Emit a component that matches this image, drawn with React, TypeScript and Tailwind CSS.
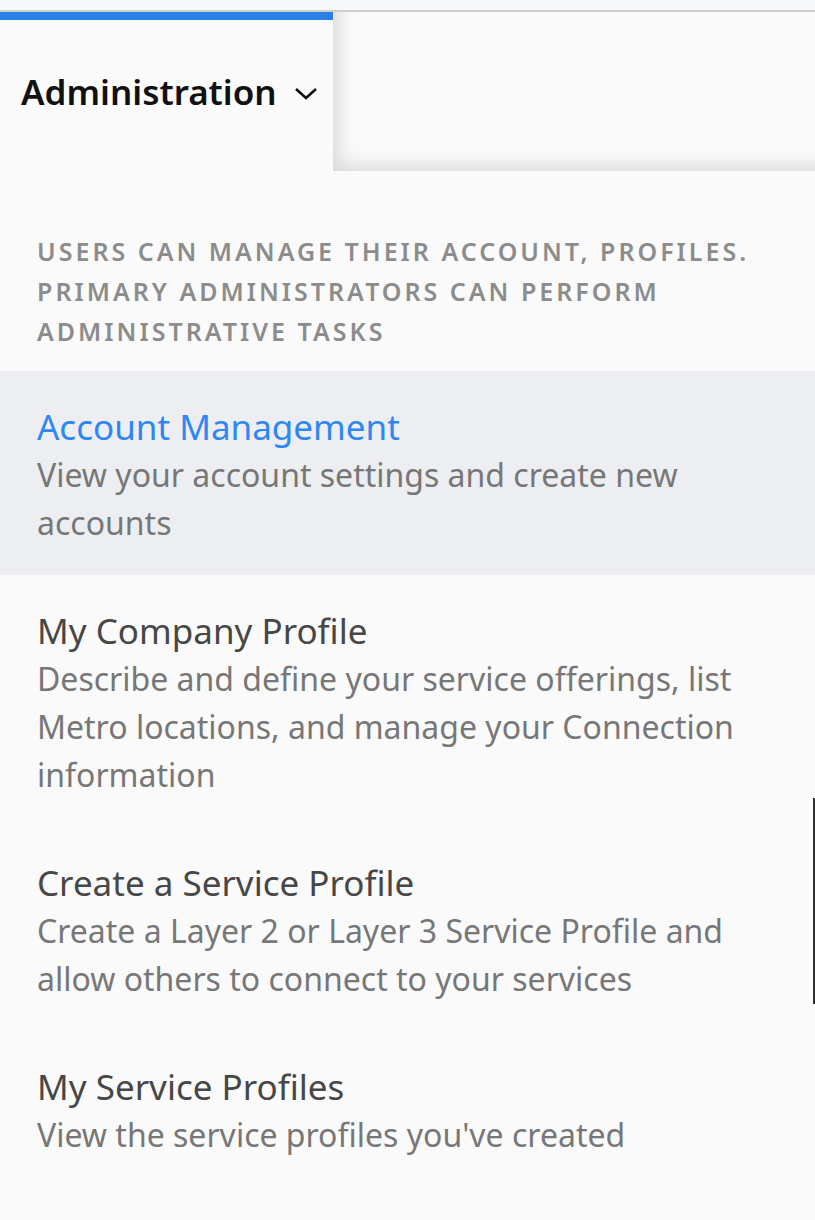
import React from "react";

const items = [
  {
    title: "Account Management",
    desc: "View your account settings and create new accounts",
    active: true,
  },
  {
    title: "My Company Profile",
    desc: "Describe and define your service offerings, list Metro locations, and manage your Connection information",
  },
  {
    title: "Create a Service Profile",
    desc: "Create a Layer 2 or Layer 3 Service Profile and allow others to connect to your services",
  },
  {
    title: "My Service Profiles",
    desc: "View the service profiles you've created",
  },
];

export default function App() {
  return (
    <div
      className="relative w-[815px] min-h-[1220px] bg-[#fafafa]"
      style={{ fontFamily: '"Noto Sans", "Open Sans", sans-serif' }}
    >
      <div className="h-[10px] bg-[#f7f8fa]" />
      <div className="h-[2px] bg-[#cfcfcf]" />
      <div className="flex h-[159px]">
        <div className="flex w-[333px] flex-col bg-[#fafafa]">
          <div className="h-[8px] bg-[#2a7fe4]" />
          <div className="flex flex-1 items-center pl-[21px] pb-[8px]">
            <span className="text-[35px] font-semibold text-[#111] leading-none">
              Administration
            </span>
            <svg
              className="ml-[17px] mt-[4px]"
              width="24"
              height="14"
              viewBox="0 0 24 14"
              fill="none"
              stroke="#111"
              strokeWidth="2.6"
            >
              <path d="M2 2 L12 11 L22 2" />
            </svg>
          </div>
        </div>
        <div className="flex-1 bg-[#fafafa] shadow-[inset_14px_-14px_18px_-8px_rgba(0,0,0,0.13)]" />
      </div>
      <div className="pl-[37px] pr-[30px] pt-[60px] pb-[20px] text-[25px] font-semibold uppercase leading-[40px] tracking-[3px] text-[#8c8c8c]">
        Users can manage their account, profiles. Primary administrators can
        perform administrative tasks
      </div>
      {items.map((it) => (
        <div
          key={it.title}
          className={`pl-[37px] pr-[30px] pt-[32px] pb-[28px] ${it.active ? "bg-[#edeef2]" : ""}`}
        >
          <div
            className={`text-[35px] leading-[48px] ${it.active ? "text-[#2d87f5]" : "text-[#474747]"}`}
          >
            {it.title}
          </div>
          <div className="text-[32px] leading-[48px] text-[#777777]">
            {it.desc}
          </div>
        </div>
      ))}
      <div className="absolute right-0 top-[798px] h-[206px] w-[2px] bg-[#2b303b]" />
    </div>
  );
}
